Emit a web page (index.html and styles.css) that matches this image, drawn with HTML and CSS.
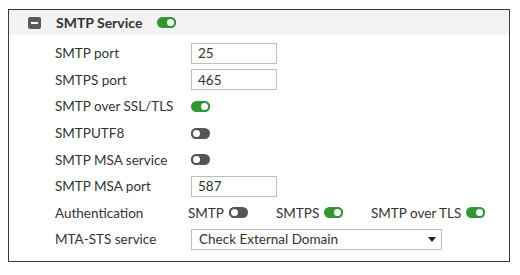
FILE: index.html
```html
<!DOCTYPE html>
<html lang="en">
<head>
    <meta charset="UTF-8">
    <title>SMTP Service</title>
    <link rel="stylesheet" href="styles.css">
</head>
<body>

<div class="panel">
    <div class="panel-head">
        <span class="collapse-btn"></span>
        <span class="head-title">SMTP Service</span>
        <span class="toggle on"></span>
    </div>

    <div class="panel-body">
        <div class="row">
            <span class="label">SMTP port</span>
            <input class="port-input" type="text" value="25">
        </div>
        <div class="row">
            <span class="label">SMTPS port</span>
            <input class="port-input" type="text" value="465">
        </div>
        <div class="row">
            <span class="label">SMTP over SSL/TLS</span>
            <span class="toggle on"></span>
        </div>
        <div class="row">
            <span class="label">SMTPUTF8</span>
            <span class="toggle"></span>
        </div>
        <div class="row">
            <span class="label">SMTP MSA service</span>
            <span class="toggle"></span>
        </div>
        <div class="row">
            <span class="label">SMTP MSA port</span>
            <input class="port-input" type="text" value="587">
        </div>
        <div class="row">
            <span class="label">Authentication</span>
            <div class="auth-list">
                <span class="auth-item auth-smtp">SMTP <span class="toggle"></span></span>
                <span class="auth-item auth-smtps">SMTPS <span class="toggle on"></span></span>
                <span class="auth-item">SMTP over TLS <span class="toggle on"></span></span>
            </div>
        </div>
        <div class="row">
            <span class="label">MTA-STS service</span>
            <div class="select-box">
                <span>Check External Domain</span>
                <span class="caret"></span>
            </div>
        </div>
    </div>
</div>

</body>
</html>
```

FILE: styles.css
```css
body {
    margin: 0;
    background: #fff;
    font-family: Lato, "Open Sans", sans-serif;
    color: #333;
}
.panel {
    margin: 9px 0 0 8px;
    width: 500px;
    height: 251px;
    border: 1.5px solid #3a3a3a;
}
.panel-head {
    height: 25px;
    background: #f3f2f4;
    display: flex;
    align-items: center;
    padding-left: 19px;
}
.collapse-btn {
    width: 13px;
    height: 12px;
    background: #5b5b5b;
    border-radius: 2px;
    position: relative;
    margin-right: 15px;
}
.collapse-btn::after {
    content: "";
    position: absolute;
    left: 3px;
    right: 3px;
    top: 5px;
    height: 2px;
    background: #fff;
}
.head-title {
    font-size: 14px;
    font-weight: bold;
    margin-right: 15px;
}
.panel-body {
    padding: 5px 0 0 46px;
}
.row {
    height: 26.6px;
    display: flex;
    align-items: center;
    font-size: 13.5px;
}
.label {
    width: 136px;
    flex-shrink: 0;
}
.port-input {
    width: 86px;
    height: 21px;
    box-sizing: border-box;
    border: 1px solid #bdbdbd;
    padding: 0 6px;
    font-family: inherit;
    font-size: 13.5px;
    color: #333;
    margin: 0;
}
/* toggle switch */
.toggle {
    display: inline-block;
    width: 19px;
    height: 11px;
    border-radius: 6px;
    background: #555;
    position: relative;
    vertical-align: middle;
}
.toggle::after {
    content: "";
    position: absolute;
    left: 0;
    top: 0;
    width: 7px;
    height: 7px;
    border-radius: 50%;
    background: #fff;
    border: 2px solid #555;
}
.toggle.on {
    background: #339633;
}
.toggle.on::after {
    left: auto;
    right: 0;
    border-color: #339633;
}
.auth-list {
    display: flex;
    margin-left: -3px;
}
.auth-item {
    display: flex;
    align-items: center;
    gap: 5px;
}
.auth-smtp {
    width: 88px;
}
.auth-smtps {
    width: 95px;
}
.select-box {
    width: 251px;
    height: 21px;
    box-sizing: border-box;
    border: 1px solid #bdbdbd;
    display: flex;
    align-items: center;
    justify-content: space-between;
    padding: 0 5px 0 7px;
}
.caret {
    width: 0;
    height: 0;
    border-left: 4px solid transparent;
    border-right: 4px solid transparent;
    border-top: 5px solid #222;
}
```
